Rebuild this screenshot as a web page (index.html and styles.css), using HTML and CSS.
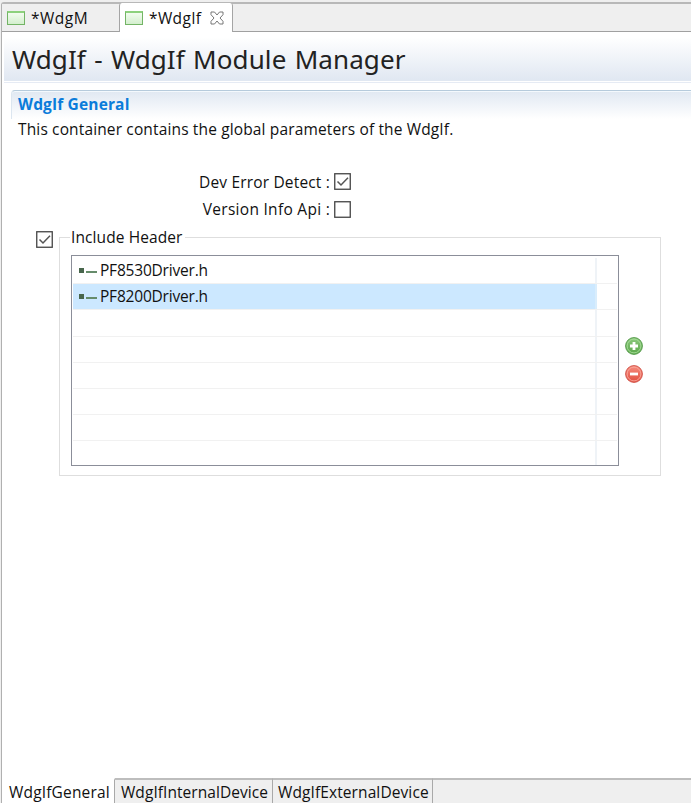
FILE: index.html
```html
<!DOCTYPE html>
<html lang="en">
<head>
<meta charset="utf-8">
<title>WdgIf</title>
<link rel="stylesheet" href="styles.css">
</head>
<body>
<div class="editor">
  <nav class="tabs">
    <div class="tab tab-first"><i class="file-icon"></i><span class="t-wdgm">*WdgM</span></div>
    <div class="tab tab-active"><i class="file-icon"></i><span class="t-wdgif">*WdgIf</span>
      <svg class="close" width="14" height="14" viewBox="0 0 14 14"><path d="M1 1H4.5L7 4L9.5 1H13V3.7L10 7L13 10.3V13H9.5L7 10L4.5 13H1V10.3L4 7L1 3.7Z" fill="#fff" stroke="#777" stroke-width="1"/></svg>
    </div>
    <div class="tab-rest"></div>
  </nav>
  <header class="title"><h1>WdgIf - WdgIf Module Manager</h1></header>
  <main>
    <section class="section">
      <h2><span>WdgIf General</span></h2>
      <p><span>This container contains the global parameters of the WdgIf.</span></p>
    </section>
    <div class="params">
      <div class="param"><span class="l-dev">Dev Error Detect :</span><svg class="check" width="17" height="17" viewBox="0 0 17 17"><rect x=".75" y=".75" width="15.5" height="15.5" fill="#fff" stroke="#444" stroke-width="1.3"/><path d="M3.5 8.5L7 12L14 4.7" fill="none" stroke="#555" stroke-width="1.5"/></svg></div>
      <div class="param"><span class="l-ver">Version Info Api :</span><svg class="check" width="17" height="17" viewBox="0 0 17 17"><rect x=".75" y=".75" width="15.5" height="15.5" fill="#fff" stroke="#444" stroke-width="1.3"/></svg></div>
    </div>
    <div class="include">
      <svg class="check" width="17" height="17" viewBox="0 0 17 17"><rect x=".75" y=".75" width="15.5" height="15.5" fill="#fff" stroke="#444" stroke-width="1.3"/><path d="M3.5 8.5L7 12L14 4.7" fill="none" stroke="#555" stroke-width="1.5"/></svg>
      <fieldset>
        <legend><span>Include Header</span></legend>
        <div class="group">
          <div class="list">
            <div class="row"><div class="cell"><i class="node"></i><span>PF8530Driver.h</span></div><div class="end"></div></div>
            <div class="row selected"><div class="cell"><i class="node"></i><span>PF8200Driver.h</span></div><div class="end"></div></div>
            <div class="row"><div class="cell"></div><div class="end"></div></div>
            <div class="row"><div class="cell"></div><div class="end"></div></div>
            <div class="row"><div class="cell"></div><div class="end"></div></div>
            <div class="row"><div class="cell"></div><div class="end"></div></div>
            <div class="row"><div class="cell"></div><div class="end"></div></div>
            <div class="row"><div class="cell"></div><div class="end"></div></div>
          </div>
          <div class="actions">
            <svg width="18" height="18" viewBox="0 0 18 18"><defs><linearGradient id="g" x2="0" y2="1"><stop stop-color="#8fcb80"/><stop offset="1" stop-color="#58a548"/></linearGradient></defs><circle cx="9" cy="9" r="8.4" fill="url(#g)" stroke="#5a9e50"/><circle cx="9" cy="9" r="6.9" fill="none" stroke="#a8dc9a" stroke-width=".9"/><path d="M9 5V13M5 9H13" stroke="#fff" stroke-width="2.8"/></svg>
            <svg width="18" height="18" viewBox="0 0 18 18"><defs><linearGradient id="r" x2="0" y2="1"><stop stop-color="#f78e80"/><stop offset="1" stop-color="#e04c3d"/></linearGradient></defs><circle cx="9" cy="9" r="8.4" fill="url(#r)" stroke="#d35a50"/><circle cx="9" cy="9" r="6.9" fill="none" stroke="#f9a79b" stroke-width=".9"/><path d="M5 9H13" stroke="#fff" stroke-width="2.8"/></svg>
          </div>
        </div>
      </fieldset>
    </div>
  </main>
  <footer class="pages">
    <div class="page page-active"><span class="p-gen">WdgIfGeneral</span></div>
    <div class="page"><span class="p-int">WdgIfInternalDevice</span></div>
    <div class="page"><span class="p-ext">WdgIfExternalDevice</span></div>
    <div class="page-rest"></div>
  </footer>
</div>
</body>
</html>
```
FILE: styles.css
```css
* { box-sizing: border-box; }
body {
  margin: 0;
  background: #efefef;
  color: #111;
  font: 15.5px/20px "Open Sans", sans-serif;
  white-space: nowrap;
  overflow: hidden;
}
h1, h2, p { margin: 0; font-weight: normal; }
svg, i { display: block; flex: none; }
.editor {
  display: flex;
  flex-direction: column;
  height: 801px;
  margin-top: 2px;
  margin-left: 1px;
  border-left: 1px solid #b0b0b0;
  border-top: 2px solid #b8b8b8;
  border-top-left-radius: 3px;
  background: #fff;
}
.tabs { display: flex; height: 28px; flex: none; background: #efefef; }
.tab { display: flex; align-items: center; padding-left: 5px; }
.tab-first { width: 117px; border-bottom: 1px solid #a0a0a0; }
.tab-active {
  width: 114px;
  margin-top: -1px;
  background: #fff;
  border: 1px solid #a5a5a5;
  border-top: 0;
  border-bottom: 0;
  border-radius: 3px 3px 0 0;
}
.tab-rest { flex: 1; border-bottom: 1px solid #a0a0a0; }
.t-wdgm { letter-spacing: .5px; }
.t-wdgif { letter-spacing: .35px; }
.file-icon {
  width: 18px;
  height: 14px;
  margin-right: 6px;
  border: 1px solid #73b465;
  border-top: 2px solid #8dd17d;
  background: linear-gradient(#f2fcef, #d4efce);
}
.close { margin-left: 9px; }
.title {
  height: 51px;
  flex: none;
  margin-left: 2px;
  padding: 7px 0 0 8px;
  background: linear-gradient(#fff 10%, #e1e8f2 95%);
  border-bottom: 1px solid #e6ebf4;
  box-shadow: inset 0 -1px #fff;
}
h1 { font: 26px/40px "Noto Sans", sans-serif; color: #222; letter-spacing: .1px; word-spacing: 1.4px; }
main { flex: 1; }
.section { margin: 7px 0 0 9px; }
h2 {
  height: 29px;
  padding: 3px 0 0 6px;
  border-top: 1px solid #b6cbdc;
  border-left: 1px solid #dce6f0;
  border-top-left-radius: 4px;
  background: linear-gradient(#e0e8f2, #fff);
  box-shadow: inset 0 1px #f4f9fd;
  color: #0a7cda;
  font-size: 15.5px;
  line-height: 20px;
  font-weight: bold;
  letter-spacing: .15px;
}
.section p { padding-left: 7px; letter-spacing: .14px; }
.params { width: 349px; margin-top: 29px; }
.param { display: flex; justify-content: flex-end; align-items: center; gap: 4px; height: 27.5px; }
.l-dev { letter-spacing: .17px; }
.l-ver { letter-spacing: .28px; }
.include { display: flex; padding-left: 34px; margin-top: 3px; }
.include > .check { margin-top: 5px; }
fieldset {
  width: 602px;
  height: 250px;
  margin: 0 0 0 6px;
  padding: 0 0 0 11px;
  border: 1px solid #dedede;
}
legend { padding: 0 2px 0 1px; margin-left: -1px; height: 22px; line-height: 22px; letter-spacing: .1px; }
.group { display: flex; margin-top: 7px; }
.list {
  width: 548px;
  height: 211px;
  padding: 2px 1px 0;
  border: 1px solid #8b8e99;
  overflow: hidden;
}
.row { display: flex; height: 26.2px; border-bottom: 1px solid #f1f1f1; }
.row:last-child { border-bottom: 0; height: 24px; }
.cell { display: flex; align-items: center; width: 524px; padding: 0 0 1px 6px; border-right: 2px solid #eff3f7; letter-spacing: -.2px; }
.selected .cell { background: #cce8ff; border-right-color: #d9edfc; }
.end { flex: 1; }
.node {
  width: 18px;
  height: 5px;
  margin-right: 3px;
  background: linear-gradient(#48664c, #48664c) 0 0 / 5px 5px no-repeat, linear-gradient(#668c6b, #668c6b) 7px 3px / 11px 2px no-repeat;
}
.actions { padding: 82px 0 0 6px; }
.actions svg + svg { margin-top: 10px; }
.pages { display: flex; height: 25px; flex: none; background: #efefef; }
.page { border-top: 2px solid #bdbdbd; border-right: 1px solid #a9a9a9; padding: 2px 0 0 6px; width: 158px; letter-spacing: .06px; }
.page-active { width: 113px; background: #fff; border-top-color: #fff; padding-left: 7px; letter-spacing: .17px; }
.page:nth-child(3) { width: 160px; padding-left: 5px; letter-spacing: .1px; }
.page-rest { flex: 1; border-top: 2px solid #bdbdbd; }
```
